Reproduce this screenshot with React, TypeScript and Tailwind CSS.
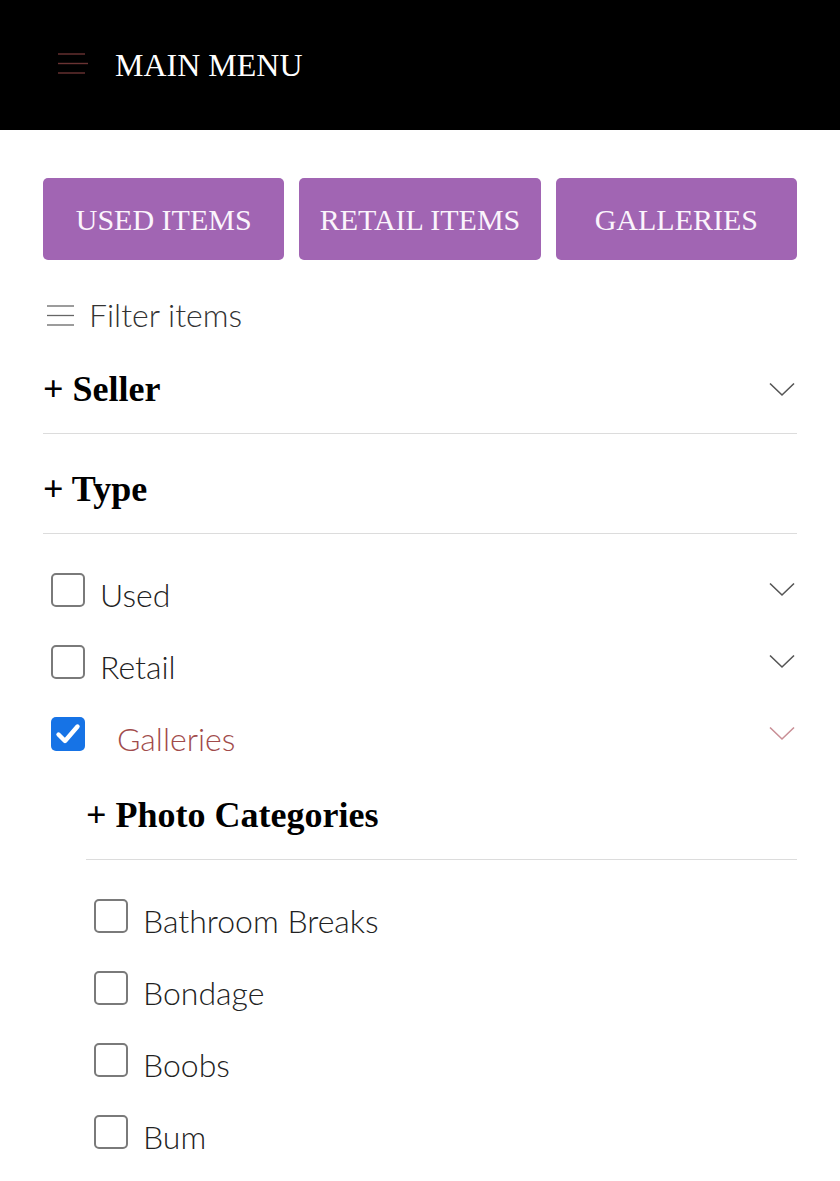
import React from "react";

const serif = "font-['Liberation_Serif',serif]";
const sans = "font-['Lato','Open_Sans',sans-serif]";

function Chevron({ color = "#555" }: { color?: string }) {
  return (
    <svg width="26" height="15" viewBox="0 0 26 15" fill="none">
      <polyline points="1,1.5 13,13 25,1.5" stroke={color} strokeWidth="1.6" />
    </svg>
  );
}

function Box({ checked = false }: { checked?: boolean }) {
  if (checked) {
    return (
      <span className="flex h-[34px] w-[34px] shrink-0 items-center justify-center rounded-[5px] bg-[#1673e6]">
        <svg width="26" height="22" viewBox="0 0 26 22" fill="none">
          <polyline points="3.5,11.5 10,18 22.5,3.5" stroke="#fff" strokeWidth="4.4" strokeLinecap="round" strokeLinejoin="round" />
        </svg>
      </span>
    );
  }
  return <span className="block h-[34px] w-[34px] shrink-0 rounded-[5px] border-2 border-[#7a7a7a] bg-white" />;
}

function CheckRow({
  label,
  checked = false,
  chevron = false,
  active = false,
}: {
  label: string;
  checked?: boolean;
  chevron?: boolean;
  active?: boolean;
}) {
  return (
    <div className="flex h-[72px] items-center">
      <div className="ml-2 -mt-[10px]">
        <Box checked={checked} />
      </div>
      <span
        className={`${sans} text-[32px] font-light leading-none ${
          active ? "ml-[32px] text-[#a14b4b]" : "ml-[15px] text-[#222]"
        }`}
      >
        {label}
      </span>
      {chevron && (
        <div className="ml-auto mr-[2px] -mt-[12px]">
          <Chevron color={active ? "#c98f96" : "#555"} />
        </div>
      )}
    </div>
  );
}

export default function App() {
  return (
    <div className="min-h-[1181px] w-[840px] bg-white">
      {/* === Header === */}
      <div className="flex h-[130px] items-center bg-black pl-[58px]">
        <svg width="31" height="22" viewBox="0 0 31 22" className="-mt-[2px]">
          <line x1="0" y1="1" x2="27" y2="1" stroke="#6a3333" strokeWidth="1.4" />
          <line x1="0" y1="10.5" x2="30" y2="10.5" stroke="#6a3333" strokeWidth="1.4" />
          <line x1="0" y1="20" x2="27" y2="20" stroke="#6a3333" strokeWidth="1.4" />
        </svg>
        <span className={`${serif} ml-[26px] text-[32px] leading-none text-white`}>MAIN MENU</span>
      </div>

      <div className="px-[43px] pt-[48px]">
        {/* === Top buttons === */}
        <div className="grid grid-cols-3 gap-[15px]">
          {["USED ITEMS", "RETAIL ITEMS", "GALLERIES"].map((t) => (
            <div
              key={t}
              className={`${serif} flex h-[82px] items-center justify-center rounded-[5px] bg-[#a165b3] text-[30px] text-[#fbf4fc]`}
            >
              {t}
            </div>
          ))}
        </div>

        {/* === Filter items === */}
        <div className="mt-[36px] flex h-[40px] items-center pl-[4px]">
          <svg width="28" height="22" viewBox="0 0 28 22">
            <line x1="0" y1="1" x2="27" y2="1" stroke="#666" strokeWidth="1.3" />
            <line x1="0" y1="10.5" x2="27" y2="10.5" stroke="#666" strokeWidth="1.3" />
            <line x1="0" y1="20" x2="27" y2="20" stroke="#666" strokeWidth="1.3" />
          </svg>
          <span className={`${sans} ml-[14px] -mt-[3px] text-[32px] font-light leading-none text-[#333]`}>Filter items</span>
        </div>

        {/* === Seller === */}
        <div className="flex items-center border-b border-[#dcdcdc] pb-[24px] pt-[33px]">
          <span className={`${serif} text-[36px] font-bold leading-[40px] text-black`}>+ Seller</span>
          <div className="ml-auto mr-[2px]">
            <Chevron />
          </div>
        </div>

        {/* === Type === */}
        <div className="border-b border-[#dcdcdc] pb-[24px] pt-[35px]">
          <span className={`${serif} text-[36px] font-bold leading-[40px] text-black`}>+ Type</span>
        </div>

        <div className="mt-[25px]">
          <CheckRow label="Used" chevron />
          <CheckRow label="Retail" chevron />
          <CheckRow label="Galleries" checked chevron active />
        </div>

        {/* === Photo categories === */}
        <div className="pl-[43px]">
          <div className="border-b border-[#dcdcdc] pb-[24px] pt-[20px]">
            <span className={`${serif} text-[36px] font-bold leading-[40px] text-black`}>+ Photo Categories</span>
          </div>
          <div className="mt-[25px]">
            {["Bathroom Breaks", "Bondage", "Boobs", "Bum"].map((c) => (
              <CheckRow key={c} label={c} />
            ))}
          </div>
        </div>
      </div>
    </div>
  );
}
